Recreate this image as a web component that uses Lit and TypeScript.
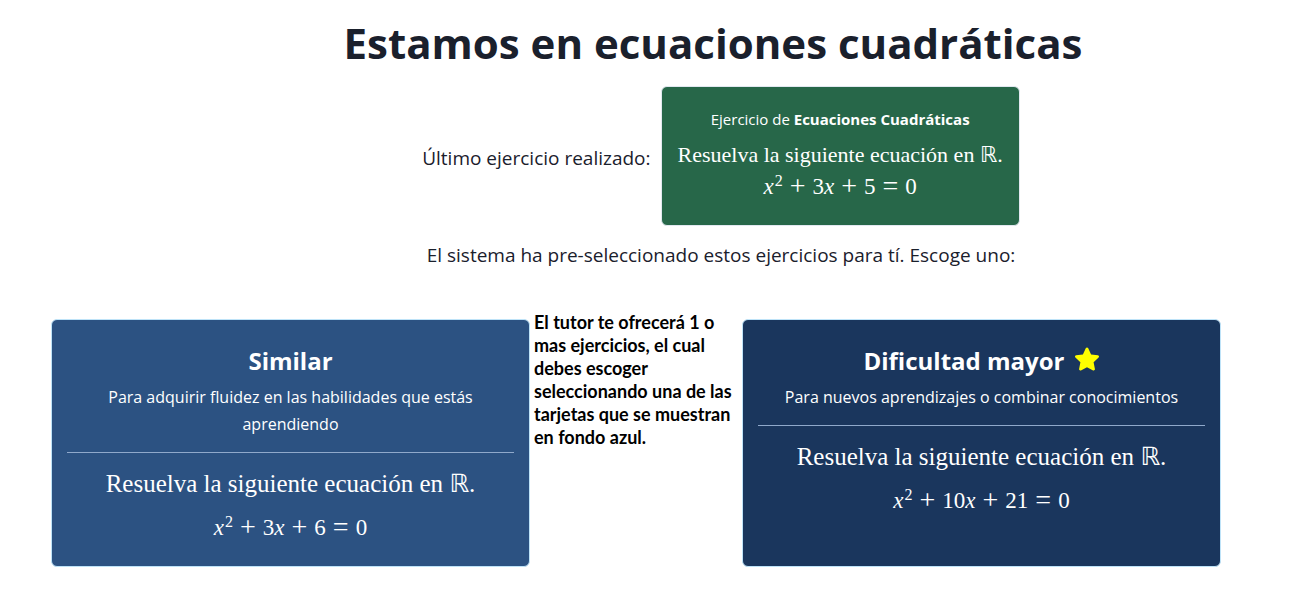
import { LitElement, html, css, nothing } from "lit";
import { customElement, property } from "lit/decorators.js";

interface Exercise {
  title: string;
  detail: string;
  middle: string;
  constant: string;
  harder: boolean;
}

const exercises: Exercise[] = [
  {
    title: "Similar",
    detail: "Para adquirir fluidez en las habilidades que estás aprendiendo",
    middle: "3",
    constant: "6",
    harder: false,
  },
  {
    title: "Dificultad mayor",
    detail: "Para nuevos aprendizajes o combinar conocimientos",
    middle: "10",
    constant: "21",
    harder: true,
  },
];

@customElement("quadratic-equation")
class QuadraticEquation extends LitElement {
  @property() middle = "";
  @property() constant = "";

  static styles = css`
    :host {
      display: block;
      font-family: "Liberation Serif", serif;
      font-size: 23px;
      line-height: 32px;
      white-space: nowrap;
    }
    .power {
      font-size: 16px;
      line-height: 0;
      vertical-align: 8px;
      margin-left: 1px;
    }
    .operator {
      margin: 0 7px;
      font-size: 28px;
      line-height: 0;
      vertical-align: -1px;
    }
  `;

  render() {
    return html`<i>x</i><span class="power">2</span><span class="operator">+</span>${this.middle}<i>x</i><span class="operator">+</span>${this.constant}<span class="operator">=</span>0`;
  }
}

@customElement("app-root")
class AppRoot extends LitElement {
  static styles = css`
    :host {
      display: block;
      color: #1a202c;
      background: #fff;
      font-family: "Open Sans", "Noto Sans", sans-serif;
    }
    .intro {
      display: flex;
      flex-direction: column;
      align-items: center;
      padding: 14px 0 0 150px;
    }
    .heading {
      margin: 0 16px 14px 0;
      font-size: 42px;
      line-height: 58px;
      font-weight: 700;
    }
    .last {
      display: flex;
      align-items: center;
      gap: 10px;
    }
    .label {
      margin: 4px 0 0;
      font-size: 19px;
      line-height: 30px;
    }
    .done {
      box-sizing: border-box;
      padding: 16px 16px 22px;
      border: 1px solid #e2e8f0;
      border-radius: 6px;
      background: #276749;
      color: #fff;
      text-align: center;
    }
    .topic {
      margin: 0 0 4px;
      font-size: 15px;
      line-height: 32px;
    }
    .statement {
      display: block;
      font-family: "Liberation Serif", "DejaVu Sans", serif;
      font-size: 22px;
      line-height: 32px;
    }
    .prompt {
      margin: 14px 0 0;
      font-size: 19px;
      line-height: 30px;
    }
    .choices {
      display: grid;
      grid-template-columns: 1fr 212px 1fr;
      padding: 49px 71px 24px 51px;
    }
    .card {
      display: flex;
      flex-direction: column;
      min-width: 0;
      padding: 23px 15px 22px;
      border: 1px solid #bee3f8;
      border-radius: 6px;
      background: #2c5282;
      color: #fff;
      font: inherit;
      text-align: center;
      cursor: pointer;
    }
    .card.harder {
      background: #1a365d;
    }
    .title {
      display: flex;
      justify-content: center;
      align-items: center;
      gap: 11px;
      font-size: 24px;
      line-height: 36px;
      font-weight: 700;
    }
    .star {
      width: 24px;
      height: 24px;
      margin-bottom: 4px;
      fill: #ff0;
    }
    .detail {
      padding: 5px 20px 14px;
      border-bottom: 1px solid #90a9cb;
      font-size: 16px;
      line-height: 27px;
    }
    .card .statement {
      margin: 15px 0 12px;
      font-size: 25px;
    }
    .note {
      margin: -8px 0 0;
      padding: 0 4px;
      color: #000;
      font-family: Lato, sans-serif;
      font-size: 18px;
      line-height: 23px;
      font-weight: 700;
    }
  `;

  private card(item: Exercise) {
    return html`
      <button type="button" class="card ${item.harder ? "harder" : ""}">
        <span class="title">
          ${item.title}
          ${item.harder
            ? html`<svg class="star" viewBox="0 0 24 24" aria-hidden="true">
                <path d="M10.9 1.1c.4-.9 1.8-.9 2.2 0l3 6.3 6.8.9c1 .1 1.5 1.3.7 2.1l-5 4.8 1.3 6.9c.2 1-.8 1.8-1.8 1.3L12 20.2l-6.1 3.2c-1 .5-2-.3-1.8-1.3l1.3-6.9-5-4.8c-.8-.8-.3-2 .7-2.1l6.8-.9z" />
              </svg>`
            : nothing}
        </span>
        <span class="detail">${item.detail}</span>
        <span class="statement">Resuelva la siguiente ecuación en ℝ.</span>
        <quadratic-equation middle=${item.middle} constant=${item.constant}></quadratic-equation>
      </button>
    `;
  }

  render() {
    return html`
      <main>
        <header class="intro">
          <h1 class="heading">Estamos en ecuaciones cuadráticas</h1>
          <div class="last">
            <p class="label">Último ejercicio realizado:</p>
            <section class="done">
              <p class="topic">Ejercicio de <b>Ecuaciones Cuadráticas</b></p>
              <span class="statement">Resuelva la siguiente ecuación en ℝ.</span>
              <quadratic-equation middle="3" constant="5"></quadratic-equation>
            </section>
          </div>
          <p class="prompt">El sistema ha pre-seleccionado estos ejercicios para tí. Escoge uno:</p>
        </header>
        <section class="choices">
          ${this.card(exercises[0])}
          <p class="note">
            El tutor te ofrecerá 1 o mas ejercicios, el cual debes escoger seleccionando una de las
            tarjetas que se muestran en fondo azul.
          </p>
          ${this.card(exercises[1])}
        </section>
      </main>
    `;
  }
}
